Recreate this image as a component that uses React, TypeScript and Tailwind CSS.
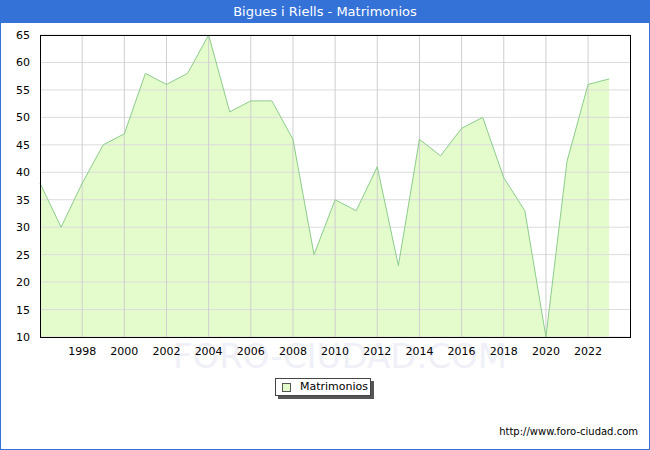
const data = [38,30,38,45,47,58,56,58,65,51,53,53,46,25,35,33,41,23,46,43,48,50,39,33,10,42,56,57];
const X0 = 40, X1 = 630, Y0 = 35, Y1 = 337;
const xs = (i: number) => X0 + i * 21.08;
const ys = (v: number) => Y1 - ((v - 10) / 55) * (Y1 - Y0);

export default function App() {
  const pts = data.map((v, i) => `${xs(i)},${ys(v)}`).join(" ");
  const area = `${xs(0)},${Y1} ${pts} ${xs(data.length - 1)},${Y1}`;
  const yTicks = [10,15,20,25,30,35,40,45,50,55,60,65];
  const xTicks = Array.from({ length: 13 }, (_, k) => 1998 + 2 * k);
  return (
    <div className="w-[650px] h-[450px] bg-[#3572d8] flex flex-col px-px pb-px" style={{ fontFamily: '"DejaVu Sans", Verdana, sans-serif' }}>
      <div className="h-[23px] flex items-center justify-center text-white text-[13px]">Bigues i Riells - Matrimonios</div>
      <div className="flex-1 bg-white flex flex-col">
        <svg width="648" height="352" viewBox="1 23 648 352" className="block">
          <text x="340" y="368" fontSize="34" fill="#f0f0f8" textAnchor="middle" fontFamily="DejaVu Sans">FORO-CIUDAD.COM</text>
          <polygon points={area} fill="#e4fccc" />
          {yTicks.map(t => (
            <g key={t}>
              <line x1={X0} x2={X1} y1={ys(t)} y2={ys(t)} stroke="#dcdcdc" />
              <text x={X0 - 10} y={ys(t) + 4} fontSize="11" textAnchor="end" fill="#000">{t}</text>
            </g>
          ))}
          {xTicks.map((y, k) => (
            <g key={y}>
              <line x1={xs(2 + 2 * k)} x2={xs(2 + 2 * k)} y1={Y0} y2={Y1} stroke="#cfcfcf" />
              <text x={xs(2 + 2 * k)} y={Y1 + 18} fontSize="11" textAnchor="middle" fill="#000">{y}</text>
            </g>
          ))}
          <polyline points={pts} fill="none" stroke="#8ccc8c" strokeWidth="1" />
          <rect x={X0 + 0.5} y={Y0 + 0.5} width={X1 - X0} height={Y1 - Y0} fill="none" stroke="#000" />
        </svg>
        <div className="flex justify-center mt-[3px]">
          <div className="relative ml-[-4px]">
            <div className="absolute left-[3px] top-[3px] w-[96px] h-[18px] bg-[#555]" />
            <div className="relative w-[96px] h-[18px] bg-white border border-[#444] flex items-center gap-[9px] pl-[6px] text-[11px]">
              <span className="w-[9px] h-[9px] bg-[#e4fccc] border border-[#555]" />
              <span>Matrimonios</span>
            </div>
          </div>
        </div>
        <div className="mt-auto mb-[10px] text-right pr-[11px] text-[10px]">http://www.foro-ciudad.com</div>
      </div>
    </div>
  );
}
